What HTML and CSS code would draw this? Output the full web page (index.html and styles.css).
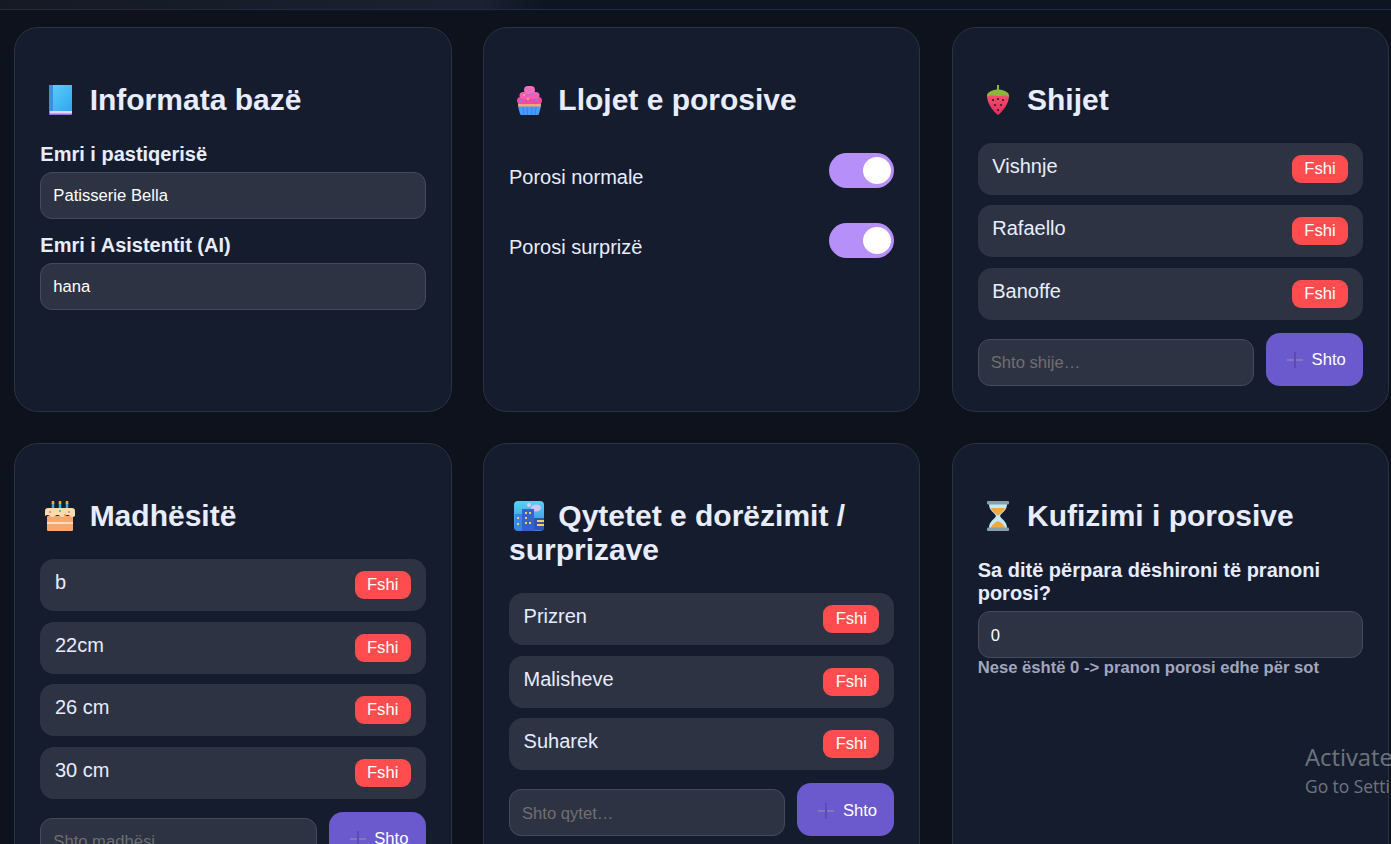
FILE: index.html
```html
<!DOCTYPE html>
<html lang="en">
<head>
    <meta charset="UTF-8">
    <meta name="viewport" content="width=device-width, initial-scale=1.0">
    <title>Paneli i pastiqerisë</title>
    <link rel="stylesheet" href="styles.css">
</head>
<body>
    <div class="topbar"></div>

    <main class="settings-grid">
        <!-- Informata baze -->
        <section class="card">
            <h2>
                <svg class="emoji" viewBox="0 0 30 30"><defs><linearGradient id="bookFront" x1="0" y1="0" x2="1" y2="1"><stop offset="0" stop-color="#5fd0f7"/><stop offset="1" stop-color="#2ea6f0"/></linearGradient></defs><rect x="4" y="0" width="23" height="30" rx="1" fill="#7d7fe0"/><rect x="5" y="26" width="22" height="2.5" fill="#f4cdea"/><rect x="4" y="0" width="23" height="26" fill="url(#bookFront)"/><rect x="4" y="0" width="4" height="26" fill="#3d8fdc"/></svg>
                Informata bazë
            </h2>
            <label class="field-label">Emri i pastiqerisë</label>
            <input class="text-input" type="text" value="Patisserie Bella">
            <label class="field-label">Emri i Asistentit (AI)</label>
            <input class="text-input" type="text" value="hana">
        </section>

        <!-- Llojet e porosive -->
        <section class="card card-toggles">
            <h2>
                <svg class="emoji" viewBox="0 0 30 30"><path d="M4 21h23l-2 8q0 1-2 1H8q-2 0-2-1z" fill="#4a9cf8"/><path d="M9 22l1 8M13 22l.5 8M18 22l-.5 8M22 22l-1 8" stroke="#3b83e0" stroke-width="1"/><rect x="4" y="18" width="23" height="3.5" rx="1" fill="#f7a474"/><rect x="3" y="12" width="25" height="7" rx="3.5" fill="#ee4aa6"/><rect x="5.5" y="7" width="20" height="7" rx="3.5" fill="#f55db6"/><rect x="10" y="1" width="11" height="8" rx="4" fill="#f76cbd"/><circle cx="10" cy="10" r="1" fill="#f7c948"/><circle cx="18" cy="9" r="1" fill="#4b9bf5"/><circle cx="14" cy="14" r="1" fill="#f7c948"/><circle cx="22" cy="15" r="1" fill="#4b9bf5"/><circle cx="7" cy="16" r="1" fill="#4b9bf5"/></svg>
                Llojet e porosive
            </h2>
            <div class="toggle-row">
                <span>Porosi normale</span>
                <span class="toggle"></span>
            </div>
            <div class="toggle-row">
                <span>Porosi surprizë</span>
                <span class="toggle"></span>
            </div>
        </section>

        <!-- Shijet -->
        <section class="card">
            <h2>
                <svg class="emoji" viewBox="0 0 30 30"><defs><linearGradient id="berry" x1="0" y1="0" x2="0" y2="1"><stop offset="0" stop-color="#f4566f"/><stop offset="1" stop-color="#e62a5c"/></linearGradient></defs><path d="M4 11q0-4 4-4h14q4 0 4 4c0 8-7 16-11 19C11 27 4 19 4 11z" fill="url(#berry)"/><path d="M4 12C4 7 9 5 14 4.500V0h2v4.500C21 5 26 7 26 12c-4-2.500-7-1-11-1s-7-1.500-11 1z" fill="#8ab83a"/><g fill="#4a1030"><circle cx="10" cy="15" r="1.100"/><circle cx="15" cy="14" r="1.100"/><circle cx="20" cy="15" r="1.100"/><circle cx="12" cy="20" r="1.100"/><circle cx="18" cy="20" r="1.100"/><circle cx="15" cy="25" r="1.100"/></g></svg>
                Shijet
            </h2>
            <ul class="item-list">
                <li><span>Vishnje</span><button class="delete-btn">Fshi</button></li>
                <li><span>Rafaello</span><button class="delete-btn">Fshi</button></li>
                <li><span>Banoffe</span><button class="delete-btn">Fshi</button></li>
            </ul>
            <div class="add-row">
                <input class="text-input" type="text" placeholder="Shto shije…">
                <button class="add-btn"><svg class="plus" viewBox="0 0 16 16"><path d="M0 8h16" stroke="#8478b8" stroke-width="2"/><path d="M8 0v16" stroke="#5f48b8" stroke-width="2"/></svg>Shto</button>
            </div>
        </section>

        <!-- Madhesite -->
        <section class="card">
            <h2>
                <svg class="emoji" viewBox="0 0 30 30"><path d="M8 2v6M15 2v6M22 2v6" stroke="#3fa9dd" stroke-width="2.500"/><path d="M8 0v3M15 0v3M22 0v3" stroke="#f7a928" stroke-width="2.500"/><rect x="2" y="15" width="26" height="15" rx="1" fill="#f7a66f"/><rect x="2" y="21" width="26" height="2" fill="#fde0b8"/><path d="M0 10q0-3 3-3h24q3 0 3 3v5q-2.500 2-5 0t-5 0-5 0-5 0-5 0-5 0z" fill="#fbdcaa"/><circle cx="5" cy="11" r="1" fill="#ee6ab0"/><circle cx="15" cy="10" r="1" fill="#3fa9dd"/><circle cx="24" cy="11" r="1" fill="#ee6ab0"/><circle cx="20" cy="14" r="1" fill="#f59a3c"/></svg>
                Madhësitë
            </h2>
            <ul class="item-list">
                <li><span>b</span><button class="delete-btn">Fshi</button></li>
                <li><span>22cm</span><button class="delete-btn">Fshi</button></li>
                <li><span>26 cm</span><button class="delete-btn">Fshi</button></li>
                <li><span>30 cm</span><button class="delete-btn">Fshi</button></li>
            </ul>
            <div class="add-row">
                <input class="text-input" type="text" placeholder="Shto madhësi…">
                <button class="add-btn"><svg class="plus" viewBox="0 0 16 16"><path d="M0 8h16" stroke="#8478b8" stroke-width="2"/><path d="M8 0v16" stroke="#5f48b8" stroke-width="2"/></svg>Shto</button>
            </div>
        </section>

        <!-- Qytetet -->
        <section class="card">
            <h2>
                <svg class="emoji" viewBox="0 0 30 30"><defs><linearGradient id="citySky" x1="0" y1="0" x2="0" y2="1"><stop offset="0" stop-color="#55d4f2"/><stop offset="1" stop-color="#3a7fe0"/></linearGradient></defs><rect width="30" height="30" rx="4" fill="url(#citySky)"/><ellipse cx="22" cy="7" rx="5" ry="3.500" fill="#d5c4f2"/><circle cx="15" cy="4" r="2" fill="#cfd4f4"/><rect x="1" y="13" width="8" height="16" fill="#3a86e6"/><rect x="8" y="8" width="12" height="22" fill="#3463cc"/><rect x="20" y="17" width="10" height="12" fill="#2f55b4"/><g fill="#f5d04e"><rect x="11" y="11" width="2" height="2"/><rect x="15" y="11" width="2" height="2"/><rect x="11" y="16" width="2" height="2"/><rect x="11" y="21" width="2" height="2"/><rect x="15" y="21" width="2" height="2"/><rect x="3" y="16" width="2" height="2"/><rect x="3" y="22" width="2" height="2"/><rect x="23" y="19" width="7" height="2"/><rect x="23" y="23" width="7" height="2"/></g></svg>
                Qytetet e dorëzimit / surprizave
            </h2>
            <ul class="item-list">
                <li><span>Prizren</span><button class="delete-btn">Fshi</button></li>
                <li><span>Malisheve</span><button class="delete-btn">Fshi</button></li>
                <li><span>Suharek</span><button class="delete-btn">Fshi</button></li>
            </ul>
            <div class="add-row">
                <input class="text-input" type="text" placeholder="Shto qytet…">
                <button class="add-btn"><svg class="plus" viewBox="0 0 16 16"><path d="M0 8h16" stroke="#8478b8" stroke-width="2"/><path d="M8 0v16" stroke="#5f48b8" stroke-width="2"/></svg>Shto</button>
            </div>
        </section>

        <!-- Kufizimi -->
        <section class="card">
            <h2>
                <svg class="emoji" viewBox="0 0 30 30"><path d="M6 3h18c0 7-6 9-7 12 1 3 7 5 7 12H6c0-7 6-9 7-12-1-3-7-5-7-12z" fill="#c3e8f6"/><path d="M8 7h14c-1 4-6 6-7 8-1-2-6-4-7-8zM8 27c1-4 5-6 7-7 2 1 6 3 7 7z" fill="#f2a83b"/><rect x="4" y="0" width="22" height="3.500" rx="1" fill="#86a0ad"/><rect x="4" y="26.500" width="22" height="3.500" rx="1" fill="#86a0ad"/></svg>
                Kufizimi i porosive
            </h2>
            <label class="field-label">Sa ditë përpara dëshironi të pranoni porosi?</label>
            <input class="text-input" type="text" value="0">
            <small class="help-text">Nese është 0 -&gt; pranon porosi edhe për sot</small>
        </section>
    </main>

    <div class="watermark">
        <div class="watermark-title">Activate</div>
        <div class="watermark-sub">Go to Setti</div>
    </div>
</body>
</html>
```

FILE: styles.css
```css
* {
    box-sizing: border-box;
}
body {
    margin: 0;
    height: 844px;
    overflow: hidden;
    position: relative;
    font-family: "Liberation Sans", Arial, sans-serif;
    background: #0d121d;
    color: #e8ecff;
}
.topbar {
    height: 10px;
    background: linear-gradient(90deg, #141924 0, #1b2130 480px, #0d1422 545px);
    border-bottom: 1px solid #232b40;
}
.settings-grid {
    display: grid;
    grid-template-columns: repeat(3, 437.4px);
    grid-template-rows: 385px auto;
    column-gap: 31.3px;
    row-gap: 31.3px;
    padding: 17px 0 0 14.3px;
}
.card {
    background: #151c2d;
    border: 1px solid #2a3142;
    border-radius: 24px;
    padding: 25px;
}
.card h2 {
    margin: 29.7px 0 25.8px;
    font-size: 30px;
    line-height: 34.3px;
    font-weight: 700;
    color: #e8ecff;
}
.emoji {
    width: 30px;
    height: 30px;
    vertical-align: -5px;
    margin: 0 6px 0 5px;
}
.field-label {
    display: block;
    margin: 0 0 6px;
    font-size: 20px;
    line-height: 23px;
    font-weight: 700;
    color: #e8ecff;
}
.text-input {
    display: block;
    width: 100%;
    height: 47px;
    margin: 0 0 15px;
    padding: 2px 12px 0;
    background: #2d3343;
    border: 1px solid #454b5c;
    border-radius: 12px;
    color: #fff;
    font-family: inherit;
    font-size: 16.64px;
}
.text-input::placeholder {
    color: #6f6f6f;
}
.card-toggles h2 {
    margin-bottom: 35.8px;
}
.toggle-row {
    display: flex;
    justify-content: space-between;
    align-items: center;
    height: 35px;
    margin-bottom: 35px;
    font-size: 20px;
    color: #e8ecff;
}
.toggle-row span:first-child {
    margin-top: 15px;
}
.toggle {
    position: relative;
    width: 65px;
    height: 35px;
    background: #b78ff9;
    border-radius: 18px;
}
.toggle::after {
    content: "";
    position: absolute;
    top: 4px;
    right: 3px;
    width: 28px;
    height: 27px;
    background: #fff;
    border-radius: 50%;
}
.item-list {
    list-style: none;
    margin: 0;
    padding: 0;
    display: flex;
    flex-direction: column;
    gap: 10.5px;
}
.item-list li {
    display: flex;
    justify-content: space-between;
    align-items: flex-start;
    height: 52px;
    padding: 12px 15px 12px 14.6px;
    background: #2d3343;
    border-radius: 14px;
    font-size: 20px;
    color: #e8ecff;
}
.delete-btn {
    width: 56px;
    height: 28px;
    padding: 0;
    background: #ff4d4f;
    border: none;
    border-radius: 9px;
    color: #fff;
    font-family: inherit;
    font-size: 16.64px;
}
.add-row {
    display: flex;
    align-items: flex-end;
    gap: 12px;
    margin-top: 13px;
}
.add-row .text-input {
    flex: 1;
    min-width: 0;
    margin: 0;
}
.add-btn {
    flex: none;
    display: flex;
    align-items: center;
    gap: 8.5px;
    width: 97px;
    height: 53px;
    padding: 2px 0 0 21px;
    background: #6a5acd;
    border: none;
    border-radius: 14px;
    color: #fff;
    font-family: inherit;
    font-size: 16.64px;
}
.plus {
    width: 16px;
    height: 16px;
}
.help-text {
    display: block;
    margin-top: -15px;
    font-size: 16.64px;
    font-weight: 700;
    color: #a0a6bd;
}
.watermark {
    position: absolute;
    left: 1305px;
    top: 742px;
    white-space: nowrap;
    font-family: "Open Sans", sans-serif;
    color: rgba(255, 255, 255, 0.4);
}
.watermark-title {
    font-size: 23.8px;
    line-height: 30px;
}
.watermark-sub {
    font-size: 17.4px;
    line-height: 28px;
}
```
